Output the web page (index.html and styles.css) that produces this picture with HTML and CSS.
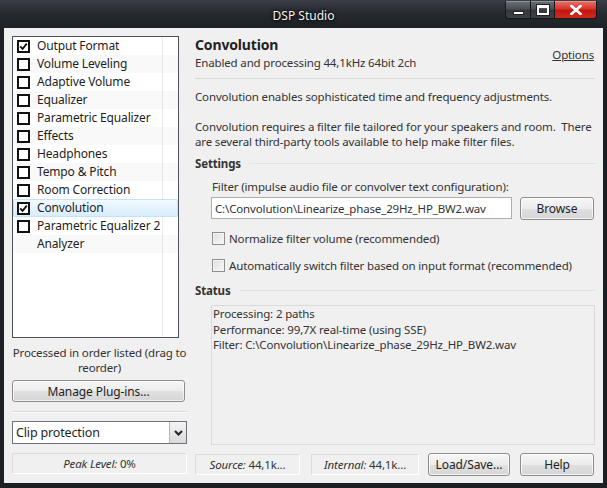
FILE: index.html
```html
<!DOCTYPE html>
<html lang="en">
<head>
    <meta charset="UTF-8">
    <title>DSP Studio</title>
    <link rel="stylesheet" href="styles.css">
</head>
<body>
    <div class="window">
        <div class="titlebar">
            <span></span>
            <span class="title">DSP Studio</span>
            <div class="controls">
                <div class="ctl ctl-min"><span class="glyph-min"></span></div>
                <div class="ctl ctl-max"><span class="glyph-max"></span></div>
                <div class="ctl ctl-close">
                    <svg width="12" height="10" viewBox="0 0 12 10"><path d="M1.5 1 L10.5 9 M10.5 1 L1.5 9" stroke="#fff" stroke-width="2.6" stroke-linecap="square"/></svg>
                </div>
            </div>
        </div>
        <div class="client">
            <div class="sidebar">
                <ul class="plugin-list">
                    <li class="checked">Output Format</li>
                    <li>Volume Leveling</li>
                    <li>Adaptive Volume</li>
                    <li>Equalizer</li>
                    <li>Parametric Equalizer</li>
                    <li>Effects</li>
                    <li>Headphones</li>
                    <li>Tempo &amp; Pitch</li>
                    <li>Room Correction</li>
                    <li class="checked selected">Convolution</li>
                    <li>Parametric Equalizer 2</li>
                    <li class="nobox">Analyzer</li>
                </ul>
                <p class="hint">Processed in order listed (drag to reorder)</p>
                <button class="btn btn-manage" type="button">Manage Plug-ins...</button>
                <div class="divider"></div>
                <div class="combo">
                    <span class="combo-text">Clip protection</span>
                    <span class="combo-arrow">
                        <svg width="9" height="6" viewBox="0 0 9 6"><path d="M1 1 L4.5 4.5 L8 1" fill="none" stroke="#222" stroke-width="2"/></svg>
                    </span>
                </div>
                <div class="panel panel-peak"><i>Peak Level:</i>&nbsp;0%</div>
            </div>

            <div class="main">
                <div class="header">
                    <div>
                        <div class="plugin-title">Convolution</div>
                        <div class="plugin-sub">Enabled and processing 44,1kHz 64bit 2ch</div>
                    </div>
                    <a class="options" href="#">Options</a>
                </div>
                <div class="rule"></div>
                <p class="desc first">Convolution enables sophisticated time and frequency adjustments.</p>
                <p class="desc">Convolution requires a filter file tailored for your speakers and room.&nbsp; There are several third-party tools available to help make filter files.</p>

                <div class="group-head"><span>Settings</span></div>
                <div class="indent">
                    <div class="field-label">Filter (impulse audio file or convolver text configuration):</div>
                    <div class="file-row">
                        <input class="file-input" type="text" value="C:\Convolution\Linearize_phase_29Hz_HP_BW2.wav">
                        <button class="btn btn-browse" type="button">Browse</button>
                    </div>
                    <label class="check check-1"><span class="box"></span>Normalize filter volume (recommended)</label>
                    <label class="check check-2"><span class="box"></span>Automatically switch filter based on input format (recommended)</label>
                </div>

                <div class="group-head status-head"><span>Status</span></div>
                <div class="indent">
                    <div class="status-box">
                        Processing: 2 paths<br>
                        Performance: 99,7X real-time (using SSE)<br>
                        Filter: C:\Convolution\Linearize_phase_29Hz_HP_BW2.wav
                    </div>
                </div>

                <div class="footer">
                    <div class="panel panel-source"><i>Source:</i>&nbsp;44,1k...</div>
                    <div class="panel panel-internal"><i>Internal:</i>&nbsp;44,1k...</div>
                    <button class="btn btn-load" type="button">Load/Save...</button>
                    <button class="btn btn-help" type="button">Help</button>
                </div>
            </div>
        </div>
    </div>
</body>
</html>
```

FILE: styles.css
```css
*,
*::before,
*::after {
    box-sizing: border-box;
}

body {
    margin: 0;
    background-color: #1d2025;
    font-family: "Noto Sans", sans-serif;
    font-size: 11.5px;
    letter-spacing: -0.15px;
    color: #1e1e1e;
}

.window {
    width: 607px;
    height: 488px;
    display: flex;
    flex-direction: column;
    background: linear-gradient(#3a3e45 0px, #26292e 14px, #1c1f23 30px, #1c1f23 100%);
    overflow: hidden;
}

/* title bar */
.titlebar {
    height: 28px;
    flex-shrink: 0;
    display: grid;
    grid-template-columns: 1fr auto 1fr;
    align-items: center;
}

.title {
    color: #f4f4f4;
    font-size: 12px;
    letter-spacing: 0;
    text-shadow: 0 0 5px #000, 0 0 2px #000;
    padding-top: 2px;
}

.controls {
    justify-self: end;
    align-self: start;
    display: flex;
    margin-top: 1px;
    margin-right: 10px;
    border: 1px solid #15171a;
    border-top: none;
    border-radius: 0 0 4px 4px;
    overflow: hidden;
}

.ctl {
    height: 17px;
    display: flex;
    align-items: center;
    justify-content: center;
    background: linear-gradient(#6a6e75 0%, #4b4f56 45%, #34373c 55%, #3e4247 100%);
    border-right: 1px solid #15171a;
    box-shadow: inset 0 1px 0 rgba(255, 255, 255, 0.25);
}

.ctl-min {
    width: 25px;
}

.ctl-max {
    width: 24px;
}

.ctl-close {
    width: 41px;
    border-right: none;
    background: linear-gradient(#e9726a 0%, #d8372c 45%, #c1180f 55%, #d02a1f 100%);
}

.glyph-min {
    display: block;
    width: 11px;
    height: 4px;
    margin-top: 6px;
    background: #fff;
    border: 1px solid #222;
}

.glyph-max {
    display: block;
    width: 12px;
    height: 10px;
    border: 2px solid #fff;
    border-top-width: 3px;
    outline: 1px solid #222;
}

/* client area */
.client {
    flex: 1;
    min-height: 0;
    margin: 0 4px 5px;
    background-color: #f0f0f0;
    display: flex;
}

.sidebar {
    width: 183px;
    padding: 8px 0 8px 8px;
    display: flex;
    flex-direction: column;
}

.plugin-list {
    list-style: none;
    margin: 0;
    padding: 0;
    width: 167px;
    height: 302px;
    flex-shrink: 0;
    border: 1px solid #4c5058;
    background: linear-gradient(to right, transparent 149px, #ececec 149px, #ececec 150px, transparent 150px), #fff;
}

.plugin-list li {
    height: 18px;
    line-height: 18px;
    padding-left: 24px;
    position: relative;
    color: #1e1e1e;
    font-size: 12px;
}

.plugin-list li:nth-child(even) {
    background-color: rgba(0, 0, 0, 0.025);
}

.plugin-list li::before {
    content: "";
    position: absolute;
    left: 4px;
    top: 3px;
    width: 13px;
    height: 13px;
    border: 2px solid #111;
    background: #fff;
}

.plugin-list li.checked::before {
    background: #fff url("data:image/svg+xml,%3Csvg xmlns='http://www.w3.org/2000/svg' width='9' height='9' viewBox='0 0 9 9'%3E%3Cpath d='M1.2 4.3 L3.6 6.8 L7.8 1.6' fill='none' stroke='%23111' stroke-width='1.8'/%3E%3C/svg%3E") center / 9px 9px no-repeat;
}

.plugin-list li.nobox::before {
    display: none;
}

.plugin-list li.selected {
    background: linear-gradient(#f4faff, #d6ecfb);
    box-shadow: inset 0 0 0 1px #c2e2f8;
    border-radius: 2px;
}

.hint {
    margin: 7px -4px 0;
    line-height: 15px;
    text-align: center;
    color: #333;
}

.btn {
    font-family: inherit;
    font-size: 12px;
    letter-spacing: -0.1px;
    color: #1e1e1e;
    border: 1px solid #8e8e8e;
    border-radius: 3px;
    background: linear-gradient(#f6f6f6 0%, #ececec 50%, #e0e0e0 51%, #d6d6d6 100%);
    box-shadow: inset 0 0 0 1px rgba(255, 255, 255, 0.7);
    padding: 0;
    flex-shrink: 0;
}

.btn-manage {
    margin-top: 5px;
    width: 173px;
    height: 22px;
}

.divider {
    margin-top: 9px;
    height: 2px;
    flex-shrink: 0;
    border-top: 1px solid #d9d9d9;
    border-bottom: 1px solid #fff;
}

.combo {
    margin-top: 8px;
    height: 23px;
    flex-shrink: 0;
    display: flex;
    border: 1px solid #6d717a;
    background: #fff;
}

.combo-text {
    flex: 1;
    line-height: 21px;
    padding-left: 3px;
    font-size: 12.5px;
}

.combo-arrow {
    width: 17px;
    display: flex;
    align-items: center;
    justify-content: center;
    border-left: 1px solid #b5b5b5;
    background: linear-gradient(#f4f4f4, #d9d9d9);
}

.panel {
    height: 21px;
    flex-shrink: 0;
    line-height: 19px;
    text-align: center;
    border: 1px solid;
    border-color: #dadada #fff #fff #dadada;
    color: #333;
}

.panel-peak {
    margin-top: 9px;
}

/* right side */
.main {
    flex: 1;
    padding: 8px 8px 0;
    display: flex;
    flex-direction: column;
}

.header {
    display: flex;
    justify-content: space-between;
    align-items: center;
}

.plugin-title {
    font-size: 14px;
    font-weight: bold;
    line-height: 18px;
    color: #222;
}

.plugin-sub {
    line-height: 18px;
    color: #333;
}

.options {
    color: #333;
    text-decoration: underline;
    margin-right: 1px;
}

.rule {
    margin-top: 6px;
    border-top: 1px solid #dadada;
}

.desc {
    margin: 15px 0 0;
    line-height: 15px;
    color: #333;
}

.desc.first {
    margin-top: 10px;
}

.group-head {
    margin-top: 7px;
    display: flex;
    align-items: center;
    line-height: 15px;
    font-weight: bold;
    color: #333;
}

.group-head::after {
    content: "";
    flex: 1;
    margin-left: 8px;
    border-top: 1px solid #dfe3e6;
}

.status-head {
    margin-top: 10px;
}

.indent {
    padding-left: 16px;
}

.field-label {
    margin-top: 8px;
    line-height: 15px;
    color: #333;
    padding-left: 1px;
}

.file-row {
    margin-top: 3px;
    display: flex;
    align-items: flex-start;
}

.file-input {
    width: 301px;
    height: 22px;
    border: 1px solid #abadb3;
    font-family: inherit;
    font-size: 11.5px;
    letter-spacing: -0.15px;
    color: #333;
    padding: 0 3px;
    outline: none;
}

.btn-browse {
    margin-left: 8px;
    width: 74px;
    height: 23px;
}

.check {
    display: flex;
    align-items: center;
    line-height: 15px;
    color: #333;
    padding-left: 1px;
    white-space: nowrap;
}

.check-1 {
    margin-top: 11px;
}

.check-2 {
    margin-top: 12px;
}

.box {
    width: 13px;
    height: 13px;
    margin-right: 4px;
    flex-shrink: 0;
    border: 1px solid #8e8f8f;
    background: linear-gradient(135deg, #dcdcdc, #fbfbfb);
    box-shadow: inset 0 0 0 1px #f4f4f4;
}

.status-box {
    margin-top: 7px;
    height: 140px;
    border: 1px solid #dadada;
    padding-left: 1px;
    line-height: 15.5px;
    color: #333;
}

.footer {
    margin-top: 8px;
    height: 23px;
    display: flex;
    align-items: center;
}

.panel-source {
    width: 105px;
}

.panel-internal {
    width: 108px;
    margin-left: 11px;
}

.btn-load {
    margin-left: 9px;
    width: 82px;
    height: 23px;
}

.btn-help {
    margin-left: 10px;
    width: 74px;
    height: 23px;
}
```
